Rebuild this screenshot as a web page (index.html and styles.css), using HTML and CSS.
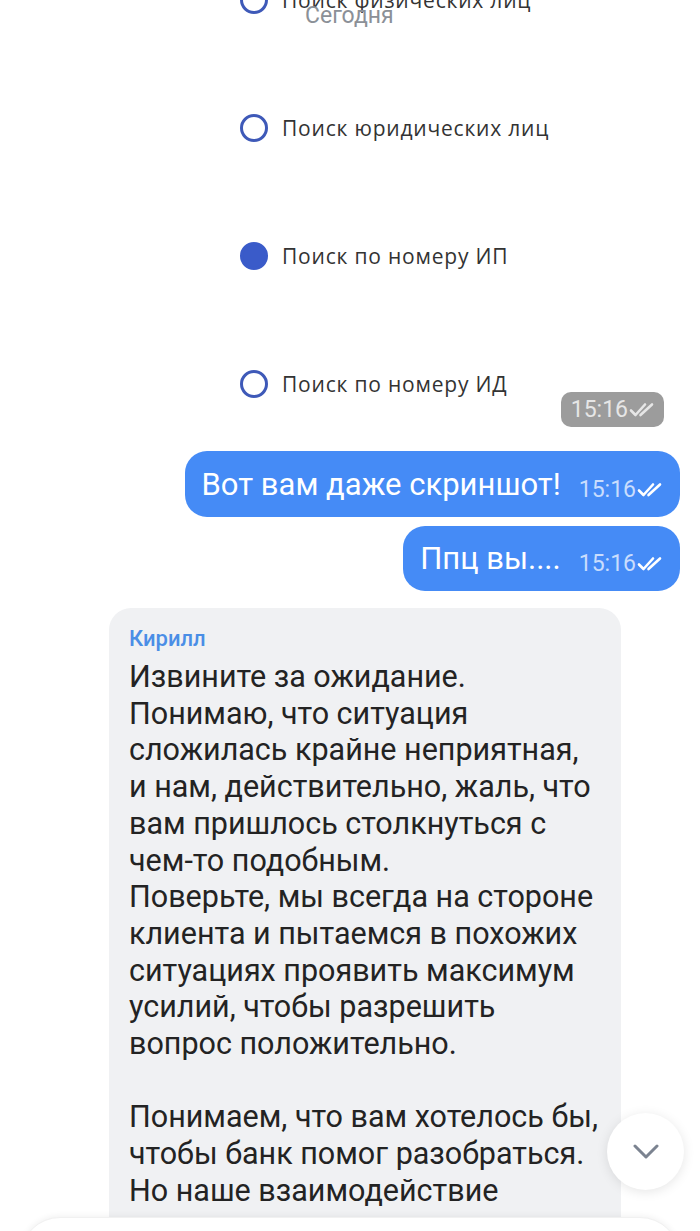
FILE: index.html
```html
<!DOCTYPE html>
<html lang="ru">
<head>
<meta charset="utf-8">
<link rel="stylesheet" href="styles.css">
</head>
<body>
<div class="screen">
  <div class="chat">
    <div class="msg-out-image">
      <div class="shot">
        <div class="radio-row"><span class="radio"></span><span class="radio-label">Поиск физических лиц</span></div>
        <div class="radio-row"><span class="radio"></span><span class="radio-label">Поиск юридических лиц</span></div>
        <div class="radio-row"><span class="radio checked"></span><span class="radio-label">Поиск по номеру ИП</span></div>
        <div class="radio-row"><span class="radio"></span><span class="radio-label">Поиск по номеру ИД</span></div>
        <div class="shot-time">15:16
          <svg class="ticks" viewBox="0 0 26 18" width="26" height="18"><path d="M2 9.5 L6.5 14 L16 3.5 M11.5 14 L23 3.5" fill="none" stroke="currentColor" stroke-width="2.6" stroke-linecap="round" stroke-linejoin="round"/></svg>
        </div>
      </div>
    </div>

    <div class="bubble out first">
      <span class="bubble-text">Вот вам даже скриншот!</span>
      <span class="meta">15:16<svg class="ticks" viewBox="0 0 26 18" width="26" height="18"><path d="M2 9.5 L6.5 14 L16 3.5 M11.5 14 L23 3.5" fill="none" stroke="currentColor" stroke-width="2.6" stroke-linecap="round" stroke-linejoin="round"/></svg></span>
    </div>
    <div class="bubble out">
      <span class="bubble-text">Ппц вы....</span>
      <span class="meta">15:16<svg class="ticks" viewBox="0 0 26 18" width="26" height="18"><path d="M2 9.5 L6.5 14 L16 3.5 M11.5 14 L23 3.5" fill="none" stroke="currentColor" stroke-width="2.6" stroke-linecap="round" stroke-linejoin="round"/></svg></span>
    </div>

    <div class="bubble in">
      <div class="author">Кирилл</div>
      <div class="in-text">Извините за ожидание.<br>Понимаю, что ситуация сложилась крайне неприятная, и нам, действительно, жаль, что вам пришлось столкнуться с чем-то подобным.<br>Поверьте, мы всегда на стороне клиента и пытаемся в похожих ситуациях проявить максимум усилий, чтобы разрешить вопрос положительно.<br><br>Понимаем, что вам хотелось бы, чтобы банк помог разобраться.<br>Но наше взаимодействие ограничено</div>
    </div>
  </div>

  <div class="date-chip">Сегодня</div>

  <button class="scroll-down" aria-label="Вниз">
    <svg viewBox="0 0 26 16" width="26" height="16"><path d="M2 2 L13 13 L24 2" fill="none" stroke="#7b8390" stroke-width="3" stroke-linecap="round" stroke-linejoin="round"/></svg>
  </button>

  <div class="composer"></div>
</div>
</body>
</html>
```

FILE: styles.css
```css
* { box-sizing: border-box; }
html, body { margin: 0; padding: 0; background: #ffffff; }
.screen {
  position: relative;
  width: 700px;
  height: 1231px;
  overflow: hidden;
  font-family: Roboto, "Noto Sans", sans-serif;
}
.chat {
  display: flex;
  flex-direction: column;
  align-items: flex-end;
  padding: 0 20px 0 0;
}
.msg-out-image {
  margin-top: -64px;
  width: 460px;
}
.shot {
  position: relative;
  height: 501px;
  overflow: hidden;
  background: #ffffff;
}
.radio-row {
  height: 128px;
  display: flex;
  align-items: center;
  padding-left: 20px;
  gap: 14px;
}
.radio {
  width: 28px;
  height: 28px;
  border-radius: 50%;
  border: 3px solid #3e59b8;
  flex: none;
}
.radio.checked {
  background: #3a5bc9;
  border-color: #3a5bc9;
}
.radio-label {
  font-family: "Open Sans", sans-serif;
  font-size: 21px;
  color: #333333;
  letter-spacing: 0.8px;
}
.shot-time {
  position: absolute;
  right: 16px;
  bottom: 10px;
  height: 35px;
  padding: 0 9px 0 10px;
  border-radius: 10px;
  background: #9c9c9c;
  color: #e6e6e6;
  font-size: 23px;
  display: flex;
  align-items: center;
  gap: 1px;
}
.bubble {
  border-radius: 22px;
}
.bubble.out {
  background: #458bf6;
  color: #ffffff;
  display: flex;
  align-items: baseline;
  padding: 14px 17px 14px 17px;
  margin-top: 9px;
}
.bubble.out.first {
  margin-top: 14px;
  padding-top: 15px;
}
.bubble-text {
  font-size: 31px;
  line-height: 37px;
}
.meta {
  margin-left: 18px;
  font-size: 23px;
  color: #c9ddfd;
  display: flex;
  align-items: center;
  gap: 1px;
  position: relative;
  top: 2px;
}
.meta .ticks { color: #ffffff; }
.bubble.in {
  align-self: flex-start;
  margin-left: 109px;
  margin-top: 17px;
  width: 512px;
  background: #f0f1f3;
  padding: 17px 20px 20px 20px;
}
.author {
  color: #4a8ee6;
  font-size: 22px;
  font-weight: 500;
  line-height: 27px;
  margin-bottom: 7px;
}
.in-text {
  font-size: 30.5px;
  line-height: 36.7px;
  color: #232323;
}
.date-chip {
  position: absolute;
  top: 2px;
  left: 305px;
  font-size: 23px;
  color: #8b9097;
  line-height: 28px;
}
.scroll-down {
  position: absolute;
  left: 607px;
  top: 1113px;
  width: 77px;
  height: 77px;
  border-radius: 50%;
  border: none;
  background: #ffffff;
  box-shadow: 0 2px 12px rgba(0, 0, 0, 0.10);
  display: flex;
  align-items: center;
  justify-content: center;
  padding: 0;
}
.composer {
  position: absolute;
  left: 20px;
  right: 20px;
  top: 1217px;
  height: 80px;
  background: #ffffff;
  border-radius: 40px;
  box-shadow: 0 -1px 6px rgba(0, 0, 0, 0.06);
  border: 1px solid #f1f1f1;
}
```
